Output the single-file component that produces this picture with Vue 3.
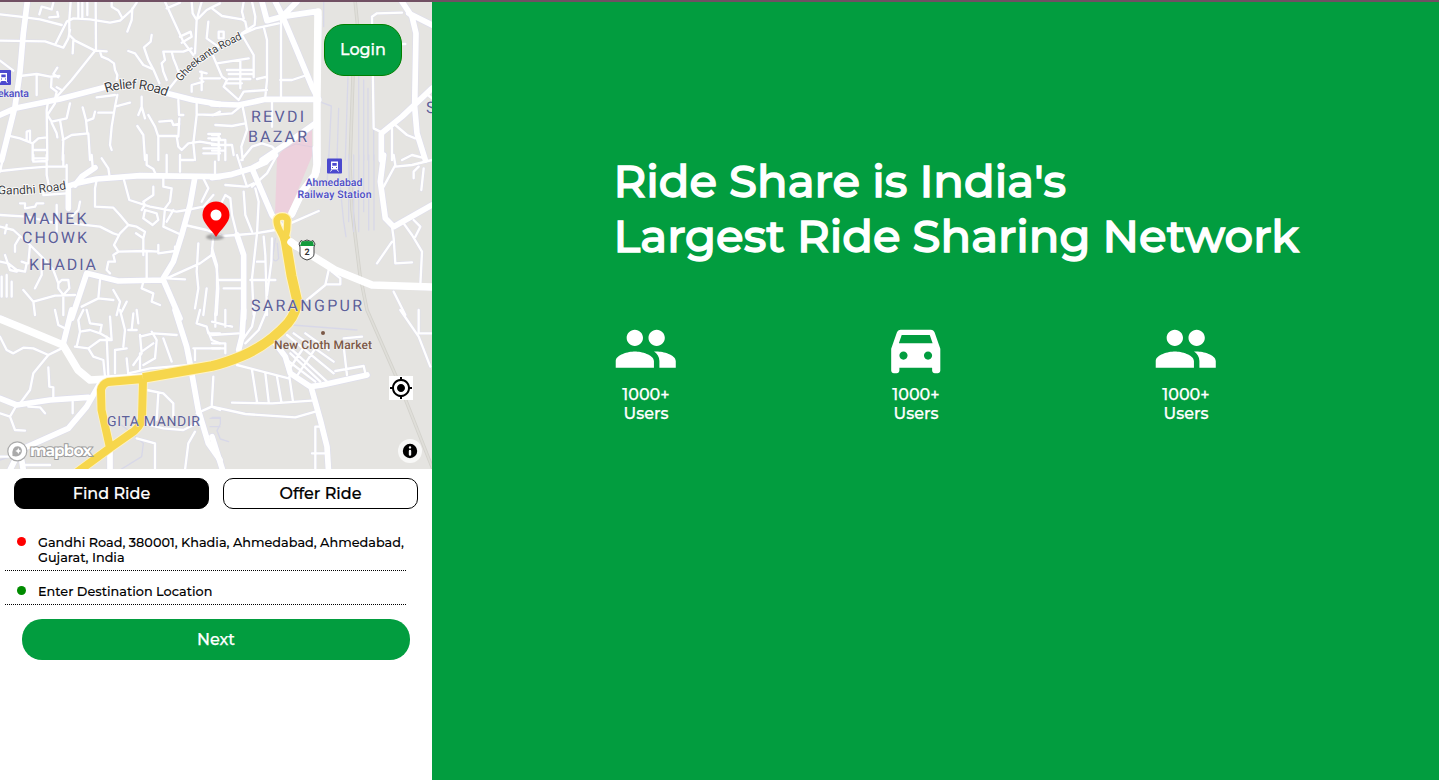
<script setup>
const tiles = [
  {
    x: 0, y: 0,
    minor: 'M0 43L60 50 120 58 185 75M0 122L135 124 190 143 205 115 210 90M212 5L208 60 208 105 225 122 285 152 320 154M165 135L200 65 220 55 270 58 330 68 360 62 395 30 410 8M287 5L288 152M235 5v50M247 5v50M262 5v40M118 43L125 20 155 28 160 8M148 52L175 50 172 36M285 152L215 240 175 285 165 297M300 155L305 170 325 178 342 190 345 210 352 225 350 240M220 122L218 160M0 182L40 212M60 228L110 222 150 230 178 228M110 222V285M172 203L160 222 175 232M155 230L153 262 170 275 165 297M170 262L185 270M385 153L405 160 430 195 460 208 478 250M455 105L452 125 432 142 445 180 460 208M335 8L335 20 355 32 367 55M397 25L395 60 382 95M495 5L520 60 550 125 580 165M500 25L540 8M540 110L572 95 575 110 545 128M605 5L590 60 585 160M575 5L578 40 590 60M625 65L620 115 655 140M595 55L620 30 640 20 660 10M490 155L550 155 575 145M490 155L495 180 485 190 490 215 500 240M515 155L520 175 530 200 535 215M500 275L540 225M575 275L575 255 610 245M600 215L620 220M600 235L660 235M605 215V270M145 300L140 330 142 480M165 310L142 345 155 365 200 355 210 310M155 368L170 400 172 412M180 360L190 420 188 480M188 420L215 405 265 400 270 480M248 322L258 360 262 400M262 362L280 355 285 335M25 407L60 415 98 430 115 415 140 412M80 420V395L90 392V425M98 430V480M98 450H140M98 475H140M290 292L345 285M345 320L390 308M295 338H340M352 285L345 320 335 380 330 435 335 450M425 290V320L415 345M425 320L435 355M412 378L430 405 435 480M445 345L465 380 475 410 475 480M475 408L530 408 535 440 545 450 565 430 600 425 660 435M535 300L537 345 550 345M478 365L515 362 520 375 538 372M538 355L535 410M590 310L590 345 580 430 585 480M590 343L640 345 660 335M625 402H660M625 415H660M610 445H660M610 460H660',
    major: 'M0 345L45 325 180 297 315 262M500 280L580 300 660 313M85 -20L70 100 60 215 45 320 5 480'
  },
  {
    x: 212, y: 0,
    minor: 'M0 25L30 48 90 58 100 65 105 90 90 100M95 5L90 35 95 55M120 5L130 50 128 75 105 90M85 105L130 85 200 70M155 80L165 120 165 240 160 290M80 300L95 275 165 270M207 60V295M0 160L30 230 45 240 35 260 80 300M90 105L125 165 125 232M15 190L110 175M85 180V265M45 210H120M50 222H120M50 237H115M45 250H90M135 237L165 230M20 95h15v20h-15zM205 240L240 240 285 225M0 345L60 340 85 320M10 375L60 378 100 370M92 320L100 360 105 390 88 440 92 480M180 300V380M88 480L120 440 150 430 180 440 195 455M0 405H20V480M0 420H40V480M0 435H60L65 465M0 452H40M480 50L485 385 515 400M480 50L495 40 570 38M570 132h10M540 385V480M550 375L585 405 610 415M648 285L660 295M570 480L600 465 640 475',
    major: 'M150 5L165 62M190 5L210 45 250 140 300 260 320 300M165 62L210 50 310 35 320 50 315 300 317 490M210 50L255 5M0 312L80 315 160 298 320 298M150 480L225 430 310 370M570 5L600 50 612 100 608 320 615 400 640 480M590 40L660 75M508 480L508 400 570 350 660 265',
    faint: 'M335 5V80M408 228L400 480M380 325L375 480M330 308L358 318 350 480M440 228V480M455 240V480M468 265V480M485 385V480'
  },
  {
    x: 0, y: 155,
    minor: 'M0 48L75 40 140 35 200 35M10 5L0 50M140 0V60L150 110M100 0V20L140 18M190 0V35M200 30V90M130 105V120L200 115M60 145L75 145 75 160 105 155 110 145 130 145M0 180L80 185 170 205M170 150V230M240 140L235 165 215 185M215 205L300 215 340 235 355 240M290 75L285 100 285 155 340 158 360 180 385 210M275 0L278 35M305 10L325 40 328 60M372 75L388 135 450 155 530 170 560 165M440 0V30L460 42 468 60M490 60V95L515 100 510 140 495 160M460 95V120L430 140 435 150 425 165M430 190L435 165 470 175 475 195 458 210 430 190M500 200L520 165M490 215L495 160M490 215L545 240M385 210L410 215 435 230 430 250 408 235M385 210L360 235 342 270 355 290 440 288 475 290 475 270M430 250V300M440 290V370M475 295L525 288 525 275M355 290L340 300 345 320 325 320 320 345 330 355M500 0V60M540 0V50M540 15H580M555 210L620 225 660 240M560 165L610 155 640 120M645 20V60M610 70L625 100 605 140M640 240L635 300 600 325 500 370M637 300L650 340 655 400 650 480M595 265L590 350 595 400 585 460M500 370L555 373M620 400L610 480M0 215L40 225 90 270 130 310 160 345 175 385M20 210L15 235M60 245L45 270 45 290M0 320L25 325 50 345 75 350 80 325 65 320M15 300L30 345 50 350M5 365V425M20 360V425M35 380V425M90 270L85 325M125 310V360L105 400M175 385L185 375 205 375 208 400 190 420 175 400zM70 405L100 440 165 422 225 420M100 440L105 480M190 420V480M300 375L295 430 245 455M295 430L340 435M340 405L360 440 350 480M365 470L380 440M430 380L425 400 460 415 455 440 480 450',
    major: 'M200 95L230 85 290 72 420 62 660 65M205 95L205 160M225 90L245 65 285 38M585 65L570 150 545 240 520 320 490 370M215 490L260 355 355 378 490 375 540 490'
  },
  {
    x: 212, y: 155,
    minor: 'M25 160L30 140 40 120 55 130 60 180 75 240M0 245L75 240 130 235 190 225M75 0L100 80 105 95 125 85M130 40L165 25 185 0M40 90L100 95M120 95L165 55 195 0M95 110L100 180 120 230M130 100L140 140 135 235 130 280 120 370 125 480M155 245L160 300 165 480M180 250L178 320 165 420M135 320H160M15 375H90M115 375H190M0 280L15 330 15 400 10 480M35 400H90M235 205L320 168M285 435L340 390 350 345M340 388H385V370L360 350M540 215L545 250 550 325 600 322M540 260L495 325M575 205L600 240 630 290 625 390M605 195L625 215 610 245M515 95L550 30 545 0M550 35L600 30 660 15M605 70V50L620 35M635 40L628 105M545 410L580 480',
    major: 'M0 68L60 58 120 40 190 0M120 40L180 180 205 210M310 -20L315 50 270 110 240 180M75 240L95 300 95 490M230 258L370 345 480 390 660 397M515 0L505 80 520 190 545 215 660 150',
    faint: 'M190 250L182 310Q190 325 200 310L196 265M350 0L345 90M375 0L395 200 402 245M410 0V200M425 0V230M440 0V230M455 0V170M470 0V225M486 0V225'
  },
  {
    x: 0, y: 310,
    minor: 'M225 110L265 115 280 140 310 150 315 200M240 65L230 110M250 0L235 30 240 65 270 60 300 70 305 45 270 40 260 0M165 0L175 45 195 55M0 80L20 120 40 130 70 113 100 115 145 135M185 115L145 135 100 190 90 240 60 280M0 310L30 320 45 360 75 362M30 320L50 285M85 290L120 292 135 310M145 172L148 230 160 232 160 260M218 275V310M265 115L300 90 335 90 330 20M300 70L335 90M320 80L325 195M345 120V190M370 110L375 60 360 0M345 120L380 115M380 145L385 195M395 60L400 10M385 60h25M410 0L415 40M420 75L425 130 400 165M420 80L460 70 530 75M455 65L470 90 465 145M425 125L460 100M420 130V180M465 145L430 165M490 85L515 155M385 190L450 175 570 165M600 0L590 40 620 50 625 70 660 70M625 65L635 90 660 100M580 115H660M585 120V150M440 240L490 250 520 280 520 320M475 250L470 330M430 340L490 355 550 360 590 340M640 200L635 290 590 310M635 290L660 300M410 385L465 400 465 480M585 365L565 400 555 480M0 440H40M75 465H150',
    major: 'M0 25L80 60 190 105 235 180 270 210 320 210 430 205M190 100L215 0M300 220L260 290 205 355 60 420 30 480M0 265L50 285 150 270 265 262M60 420L70 480M525 0L560 110 570 160 595 300 625 400 660 450M330 415V480',
    faint: 'M365 345L430 400 425 440 360 480M630 325h30M630 350h30M0 450L60 430'
  },
  {
    x: 212, y: 310,
    minor: 'M0 35L60 50M10 10V50M40 0V50M0 75L80 70M0 100H40V130M0 115H40M165 0L140 60 100 100M130 0L120 50 95 85M75 165L230 205M120 180L135 275M160 190L170 275M195 200L208 275M232 200L243 275M60 278L180 280 300 272M0 290L100 312 250 322 310 305M310 350V480M300 430H340M310 350h20M225 75L365 190M245 70L365 155M230 110L345 215M235 130L325 215M225 150L310 215M280 70L350 120M320 100L250 205M270 120L230 180M395 110L405 195M370 183L455 168 460 190M395 85L450 80M565 0L620 80 655 170M620 0V70H660',
    major: 'M190 100L220 140 235 190 295 230 330 225 465 195M297 230L325 330 345 410 350 490M95 0L90 80 80 120M0 380L35 490',
    faint: 'M240 45L435 60M0 322h25v20l-10 20 10 25 25 8'
  }
]
const stats = [
  { icon: 'people', value: '1000+', label: 'Users' },
  { icon: 'car', value: '1000+', label: 'Users' },
  { icon: 'people', value: '1000+', label: 'Users' }
]
const highway = 'M285 237L291.500 276 297 300Q297 312 288 323 268 345 242 356 225 363 212 366L143 378'
const loop = 'M284 240C280 229 276 227 276.700 220Q278 216.500 282.300 216.500T287.500 220L287 230 285 240'
const branch = 'M143 379L108 382Q102 384 101 390L101.500 410 110 448 76 473M143 379L142 419Q140 428 130 434L110 448'
</script>

<template>
  <div class="page">
    <aside class="panel">
      <div class="map">
        <svg class="canvas" viewBox="0 2 432 467" text-rendering="geometricPrecision">
          <rect y="0" width="432" height="470" fill="#e5e4e1" />
          <path d="M287 143L312 124V156L288 214 275 215 277 158Z" fill="#edd0dc" />
          <path d="M279 151L296 144 312 147M300 143V136" class="parcel" />
          <path class="rail" d="M355 0L362 70M353 76L350 165 352 210 360 275 367 310 399 383 434 472" />
          <path class="sleepers" d="M355 0L362 70M353 76L350 165 352 210 360 275 367 310 399 383 434 472" />
          <g v-for="(t, i) in tiles" :key="'f' + i" :transform="`translate(${t.x} ${t.y}) scale(.33333)`">
            <path v-if="t.faint" class="faint" :d="t.faint" />
          </g>
          <g v-for="(t, i) in tiles" :key="'c' + i" :transform="`translate(${t.x} ${t.y}) scale(.33333)`">
            <path class="minor-case" :d="t.minor" />
            <path class="major-case" :d="t.major" />
          </g>
          <g v-for="(t, i) in tiles" :key="'r' + i" :transform="`translate(${t.x} ${t.y}) scale(.33333)`">
            <path class="minor" :d="t.minor" />
            <path class="major" :d="t.major" />
          </g>
          <path class="wide" d="M318 12L317 99 317 165 315 175 302 192 292 213M290 242L335 270 372 285 434 287M0 319L27 330 63 345 78 370 90 380 143 377" />
          <g class="yellow-case"><path :d="highway" stroke-width="11.500" /><path :d="loop" stroke-width="9" /><path :d="branch" stroke-width="9.500" /></g>
          <g class="yellow"><path :d="highway" stroke-width="9.800" /><path :d="loop" stroke-width="6.500" /><path :d="branch" stroke-width="8" /></g>
          <path class="wide" d="M291 242L296 246" />

          <g class="area">
            <text x="251" y="122" textLength="53">REVDI</text>
            <text x="248" y="142" textLength="59">BAZAR</text>
            <text x="23" y="223.500" textLength="63.500">MANEK</text>
            <text x="22" y="243" textLength="65">CHOWK</text>
            <text x="29" y="270" textLength="67">KHADIA</text>
            <text x="251" y="311" textLength="111">SARANGPUR</text>
            <text x="107" y="426" class="small" textLength="93">GITA MANDIR</text>
            <text x="426" y="113">S</text>
          </g>
          <g class="street">
            <path id="relief" d="M106 93Q136 82 172 99" fill="none" stroke="none" />
            <path id="gheekanta" d="M181 82Q198 58 249 36" fill="none" stroke="none" />
            <path id="gandhi" d="M-2 194Q28 196 74 188" fill="none" stroke="none" />
            <text font-size="13.500"><textPath href="#relief" textLength="62">Relief Road</textPath></text>
            <text font-size="11"><textPath href="#gheekanta" textLength="76">Gheekanta Road</textPath></text>
            <text font-size="12"><textPath href="#gandhi" textLength="69">Gandhi Road</textPath></text>
          </g>
          <g class="station">
            <text x="-2" y="97" textLength="31">ekanta</text>
            <text x="305.500" y="185.500" textLength="57">Ahmedabad</text>
            <text x="297.500" y="198" textLength="74">Railway Station</text>
          </g>
          <g v-for="p in [[-4, 70], [327, 158.500]]" :key="p[0]" :transform="`translate(${p[0]} ${p[1]})`">
            <rect width="15" height="15" rx="1" fill="#4b49ce" />
            <path fill="#fff" fill-rule="evenodd" d="M4 3h7v8H4zM5.300 4.500v2.700h4.400V4.500zM5 8.500v1h1v-1zM9 8.500v1h1v-1z" />
            <path d="M5 11l-1.500 2M10 11l1.500 2" stroke="#fff" />
          </g>
          <g class="market">
            <circle cx="323" cy="333" r="2" />
            <text x="274" y="348.500" textLength="98">New Cloth Market</text>
          </g>
          <g class="shield">
            <path d="M301 240.500L303 241.500 307 240 311 241.500 313 240.500 315 244 314 247V254Q314 258 307 260 300 258 300 254V247L299 244Z" fill="#fff" stroke="#444" />
            <path d="M301.500 241.500L307 241 313 241.500 314 246H300Z" fill="#139a3c" />
            <text x="307" y="255" text-anchor="middle" font-size="9" font-weight="700" fill="#333">2</text>
          </g>
          <defs><filter id="soft"><feGaussianBlur stdDeviation="1.100" /></filter></defs>
          <ellipse cx="215" cy="237" rx="9" ry="3" fill="#555" opacity=".5" filter="url(#soft)" />
          <path d="M216 237C211 229 202.500 223 202.500 215A13.500 13.500 0 0 1 229.500 215C229.500 223 221 229 216 237Z" fill="#f00" />
          <circle cx="216" cy="215" r="5.500" fill="#fff" />
          <g class="brand">
            <circle cx="17.300" cy="451.300" r="9.500" fill="#fff" stroke="#aaa" stroke-width="1.200" />
            <path d="M12.500 456Q11.500 446 18 446.300A5 5 0 0 1 22 451Q21 458 12.500 456Z" fill="#aaa" />
            <path d="M18.300 448l1 2 2 1-2 1-1 2-1-2-2-1 2-1z" fill="#fff" />
            <text x="30" y="456" textLength="62">mapbox</text>
          </g>
        </svg>
        <button class="login">Login</button>
        <button class="locate" aria-label="Locate">
          <svg viewBox="0 0 24 24"><path d="M12 8c-2.210 0-4 1.790-4 4s1.790 4 4 4 4-1.790 4-4-1.790-4-4-4zm8.940 3c-.46-4.170-3.770-7.480-7.940-7.940V1h-2v2.060C6.830 3.520 3.520 6.830 3.060 11H1v2h2.060c.46 4.170 3.770 7.480 7.940 7.940V23h2v-2.060c4.170-.46 7.480-3.770 7.940-7.940H23v-2h-2.060zM12 19c-3.870 0-7-3.130-7-7s3.130-7 7-7 7 3.130 7 7-3.130 7-7 7z" /></svg>
        </button>
        <button class="info" aria-label="Info">
          <svg viewBox="0 0 20 20"><path fill-rule="evenodd" d="M4 10a6 6 0 1 0 12 0 6 6 0 1 0-12 0m5-3a1 1 0 1 0 2 0 1 1 0 1 0-2 0m0 3a1 1 0 1 1 2 0v3a1 1 0 1 1-2 0" /></svg>
        </button>
      </div>

      <div class="tabs">
        <button class="tab active">Find Ride</button>
        <button class="tab">Offer Ride</button>
      </div>
      <div class="fields">
        <div class="field">
          <i class="dot from"></i>
          <p>Gandhi Road, 380001, Khadia, Ahmedabad, Ahmedabad,<br>Gujarat, India</p>
        </div>
        <div class="field last">
          <i class="dot to"></i>
          <p>Enter Destination Location</p>
        </div>
      </div>
      <button class="next">Next</button>
    </aside>

    <main class="hero">
      <h1>Ride Share is India's<br>Largest Ride Sharing Network</h1>
      <div class="stats">
        <div v-for="(s, i) in stats" :key="i" class="stat">
          <svg viewBox="0 0 24 24">
            <path v-if="s.icon === 'people'" d="M16 11c1.660 0 2.990-1.340 2.990-3S17.660 5 16 5c-1.660 0-3 1.340-3 3s1.340 3 3 3zm-8 0c1.660 0 2.990-1.340 2.990-3S9.660 5 8 5C6.340 5 5 6.340 5 8s1.340 3 3 3zm0 2c-2.330 0-7 1.170-7 3.500V19h14v-2.500c0-2.330-4.670-3.500-7-3.500zm8 0c-.29 0-.62.020-.97.050 1.160.84 1.970 1.970 1.970 3.450V19h6v-2.500c0-2.330-4.670-3.500-7-3.500z" />
            <path v-else d="M18.920 6.010C18.720 5.420 18.160 5 17.500 5h-11c-.66 0-1.210.42-1.420 1.010L3 12v8c0 .55.450 1 1 1h1c.55 0 1-.45 1-1v-1h12v1c0 .55.450 1 1 1h1c.55 0 1-.45 1-1v-8l-2.080-5.990zM7.500 16c-.83 0-1.500-.67-1.500-1.500S6.670 13 7.500 13s1.500.67 1.500 1.500S8.330 16 7.500 16zm9 0c-.83 0-1.500-.67-1.500-1.500s.67-1.500 1.500-1.500 1.500.67 1.500 1.500-.67 1.500-1.500 1.500zM5.810 10l1.040-3h10.290l1.040 3z" />
          </svg>
          <span>{{ s.value }}</span>
          <span>{{ s.label }}</span>
        </div>
      </div>
    </main>
  </div>
</template>

<style scoped>
.page { display: flex; height: 780px; border-top: 2px solid #715063; box-sizing: border-box; font-family: Montserrat, Inter, sans-serif; font-weight: 500; overflow: hidden; }
button { font: inherit; padding: 0; margin: 0; cursor: pointer; box-sizing: border-box; }
.panel { width: 432px; flex: none; background: #fff; display: flex; flex-direction: column; }
.map { position: relative; height: 467px; overflow: hidden; }
.canvas { display: block; width: 432px; height: 467px; }
.canvas path { stroke-linejoin: round; }
.minor, .major, .minor-case, .major-case, .faint, .wide, .rail, .sleepers, .parcel { fill: none; stroke-linecap: round; }
.minor { stroke: #fff; stroke-width: 7; }
.major { stroke: #fff; stroke-width: 17; }
.minor-case { stroke: #dedeec; stroke-width: 10; }
.major-case { stroke: #dedeec; stroke-width: 21; }
.faint { stroke: #d8d8e8; stroke-width: 4; }
.wide { stroke: #fff; stroke-width: 7.500; }
.rail { stroke: #d3d2cc; stroke-width: 3.500; }
.sleepers { stroke: #dfded9; stroke-width: 1.800; }
.parcel { stroke: #e0ccdc; stroke-width: 1; }
.yellow, .yellow-case { fill: none; }
.yellow-case { stroke: #fff3c4; }
.yellow { stroke: #f6d64c; }
.area { font: 400 16px Roboto, sans-serif; fill: #5d6098; paint-order: stroke; stroke: #eeedef; stroke-width: .8px; }
.area .small { font-size: 14px; }
.street { font-family: Roboto, sans-serif; font-weight: 400; fill: #3e3e42; paint-order: stroke; stroke: #fff; stroke-width: 1.500px; }
.station { font: 500 10.500px Roboto, sans-serif; fill: #4d4dc4; paint-order: stroke; stroke: #eeeef5; stroke-width: 1px; }
.market { font: 500 12px Roboto, sans-serif; fill: #7b5947; }
.market text { paint-order: stroke; stroke: #f2f0ed; stroke-width: 1px; }
.shield { font-family: Roboto, sans-serif; }
.brand text { font: 700 16px Montserrat, Inter, sans-serif; fill: #fff; stroke: #9d9d9d; stroke-width: 2px; paint-order: stroke; }
.login { position: absolute; left: 324px; top: 22px; width: 78px; height: 52px; border: 1px solid #008000; border-radius: 20px; background: #029d3f; color: #fff; font-size: 16px; padding-bottom: 2px; -webkit-text-stroke: .25px #fff; }
.locate { position: absolute; left: 389px; top: 374px; width: 24px; height: 24px; border: 0; background: #fff; }
.locate svg { display: block; width: 24px; height: 24px; }
.info { position: absolute; left: 398px; top: 437px; width: 24px; height: 24px; border: 0; border-radius: 12px; background: #f8f8f7; }
.info svg { display: block; width: 24px; height: 24px; }
.tabs { display: flex; gap: 14px; padding: 9px 14px 0; }
.tab { flex: 1; height: 31px; border: 1px solid #000; border-radius: 10px; background: #fff; color: #000; font-size: 16px; -webkit-text-stroke: .2px; }
.tab.active { background: #000; color: #fff; }
.fields { width: 401px; margin: 14px 0 0 5px; }
.field { display: flex; align-items: flex-start; border-bottom: 1px dotted #000; padding: 12px 0 5px 12px; }
.field.last { padding-top: 13px; }
.dot { width: 9px; height: 9px; border-radius: 50%; flex: none; margin: 2px 12px 0 0; }
.from { background: #f00; }
.to { background: #008b00; }
.field p { margin: 0; font-size: 12.800px; line-height: 15px; white-space: nowrap; -webkit-text-stroke: .1px; }
.next { width: 388px; height: 41px; margin: 14px 0 0 22px; border: 0; border-radius: 20px; background: #029d3f; color: #fff; font-size: 16px; -webkit-text-stroke: .25px; }
.hero { flex: 1; background: #029d3f; color: #fff; padding: 151px 0 0 181.500px; }
h1 { margin: 0; font-size: 45px; font-weight: 500; line-height: 55px; white-space: nowrap; -webkit-text-stroke: 1.400px #fff; }
.stats { display: grid; grid-template-columns: repeat(3, 270px); margin: 53px 0 0 -102.500px; }
.stat { display: flex; flex-direction: column; align-items: center; font-size: 16px; line-height: 19px; -webkit-text-stroke: .25px; }
.stat svg { width: 65.500px; height: 65.500px; fill: #fff; margin: 0 0 3.500px -1.500px; }
</style>
